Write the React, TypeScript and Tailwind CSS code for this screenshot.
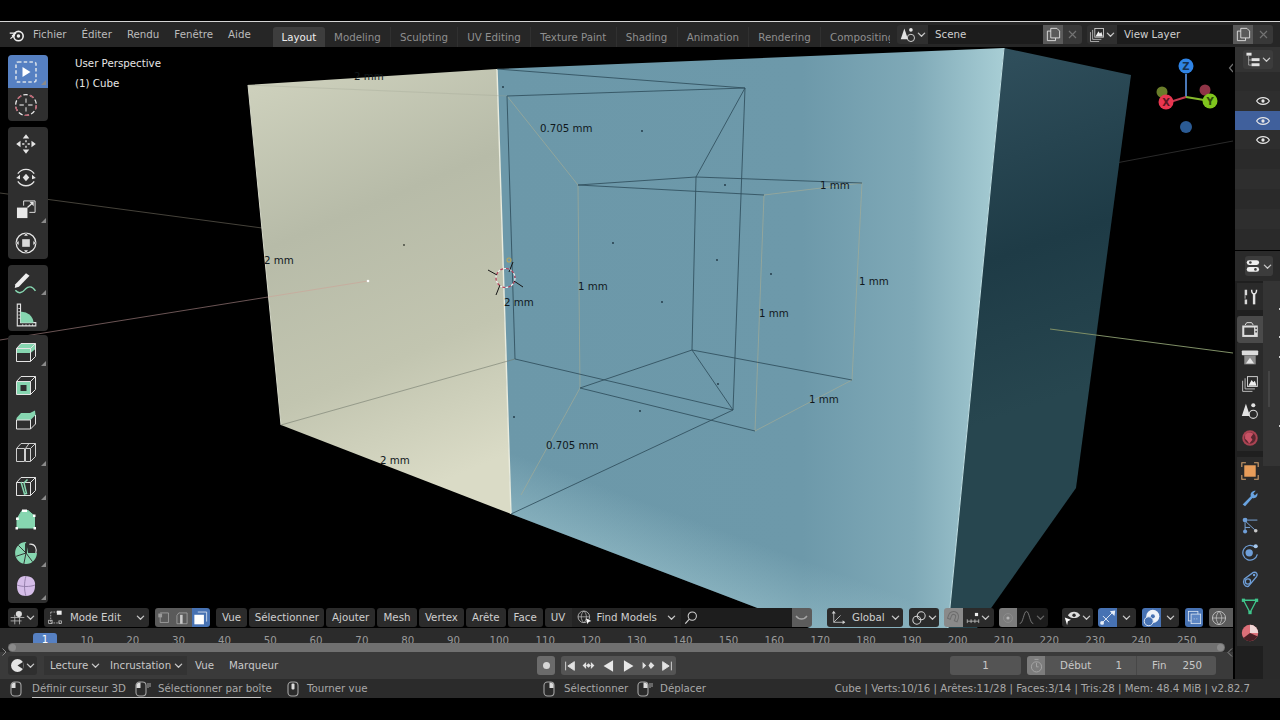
import React from 'react';

const W = '#e4e4e4';
const G = '#86d6b0';

// small triangle in the corner of tool buttons
const Corner = () => (
  <svg width="5" height="5" viewBox="0 0 5 5" className="absolute right-[2px] bottom-[3px]">
    <path d="M5 0V5H0Z" fill="#8a8a8a" />
  </svg>
);

const Chev = ({ c = '#c8c8c8', s = 9 }: { c?: string; s?: number }) => (
  <svg width={s} height={s} viewBox="0 0 10 10" fill="none">
    <path d="M1.5 3.5L5 7L8.5 3.5" stroke={c} strokeWidth="1.4" strokeLinecap="round" strokeLinejoin="round" />
  </svg>
);

const Ico = ({ s = 22, children }: { s?: number; children: React.ReactNode }) => (
  <svg width={s} height={s} viewBox="0 0 22 22" fill="none">{children}</svg>
);

const Cube = () => (
  <path d="M1.5 7.5H15.5V20.5H1.5ZM1.5 7.5L6 2.5H20.5V15.5L15.5 20.5M15.5 7.5L20.5 2.5" stroke={W} strokeWidth="1" strokeLinejoin="round" />
);

const tools: { icon: React.ReactNode; corner?: boolean; active?: boolean }[][] = [
  [
    {
      active: true,
      corner: true,
      icon: (
        <Ico>
          <rect x="1" y="1" width="20" height="20" rx="2" stroke="#d7dfe9" strokeWidth="1.6" strokeDasharray="3.5 2.2" />
          <path d="M7.5 6V16L15.5 11Z" fill="#fff" />
        </Ico>
      ),
    },
    {
      icon: (
        <Ico s={24}>
          <circle cx="11" cy="11" r="9.5" stroke="#e8e8e8" strokeWidth="1.2" strokeDasharray="4 2" />
          <circle cx="11" cy="11" r="9.5" stroke="#c05a6a" strokeWidth="1.2" strokeDasharray="4 8" />
          <path d="M11 5V9M11 13V17M5 11H9M13 11H17" stroke="#bbb" strokeWidth="1.2" />
        </Ico>
      ),
    },
  ],
  [
    {
      icon: (
        <Ico s={24}>
          <path d="M11 2L14 6H8ZM11 20L8 16H14ZM2 11L6 8V14ZM20 11L16 14V8Z" fill={W} />
          <path d="M7.5 11H9.5M12.5 11H14.5M11 7.5V9.5M11 12.5V14.5" stroke={W} strokeWidth="1.3" />
        </Ico>
      ),
    },
    {
      icon: (
        <Ico s={24}>
          <path d="M3.5 8A9 9 0 0 1 18.5 8M3.5 15A9 9 0 0 0 18.5 15" stroke={W} strokeWidth="1.2" />
          <path d="M11 8L14 11.5L11 15L8 11.5Z" fill={W} />
          <path d="M2 12L5.5 9V13ZM20 12L16.5 9V13Z" fill={W} />
        </Ico>
      ),
    },
    {
      corner: true,
      icon: (
        <Ico s={21}>
          <rect x="1" y="9" width="11" height="11" fill="#e8e8e8" />
          <path d="M8 7V2H20V14H14" stroke={W} strokeWidth="1" />
          <path d="M12 9L17 4.5" stroke={W} strokeWidth="1.4" />
          <path d="M18.5 3V7.5L14 3Z" fill={W} />
        </Ico>
      ),
    },
    {
      icon: (
        <Ico s={24}>
          <circle cx="11" cy="11" r="9" stroke={W} strokeWidth="1.2" />
          <rect x="7.5" y="7.5" width="7" height="7" fill="#d8d8d8" />
          <path d="M11 1.5L13 4.5H9ZM11 20.5L9 17.5H13ZM1.5 11L4.5 9V13ZM20.5 11L17.5 13V9Z" fill={W} stroke="#333" strokeWidth=".4" />
        </Ico>
      ),
    },
  ],
  [
    {
      corner: true,
      icon: (
        <Ico s={26}>
          <path d="M2 13L11 3.5L14 5.8L5 15L1.5 16Z" fill="#eee" />
          <path d="M2 18C5 21.5 8 20 10.5 17C13 14.5 16 14 19 18.5" stroke={G} strokeWidth="1.2" />
        </Ico>
      ),
    },
    {
      icon: (
        <Ico s={24}>
          <path d="M3 1H6V18H20V21H3Z" stroke={W} strokeWidth="1" />
          <path d="M6 8A11 11 0 0 1 18 18H6Z" fill={G} />
          <path d="M4 5H6M4 8H6M4 11H6M4 14H6M8 19.5V21M11 19.5V21M14 19.5V21M17 19.5V21" stroke={W} strokeWidth=".8" />
        </Ico>
      ),
    },
  ],
  [
    {
      corner: true,
      icon: (
        <Ico>
          <path d="M1.5 7.5L6 2.5H20.5V8L15.5 12H1.5Z" fill={G} />
          <Cube />
        </Ico>
      ),
    },
    {
      icon: (
        <Ico>
          <path d="M1.5 7.5H15.5V20.5H1.5ZM5.5 11V17H11.5V11Z" fill={G} fillRule="evenodd" />
          <Cube />
        </Ico>
      ),
    },
    {
      icon: (
        <Ico>
          <path d="M1.5 10L6 5H15L20 2.5L20.5 7L15.5 12H1.5Z" fill={G} />
          <path d="M1.5 12H15.5V21H1.5ZM15.5 21L20.5 16V7" stroke={W} strokeWidth="1" />
        </Ico>
      ),
    },
    {
      corner: true,
      icon: (
        <Ico>
          <path d="M1.5 7.5H9.5V20.5H1.5ZM1.5 7.5L6 2.5H20.5V15.5L15.5 20.5H10.5V7.5M10.5 7.5H15.5V20.5M15.5 7.5L20.5 2.5M10.5 7.5L14 2.5" stroke="#cfcfcf" strokeWidth="1" />
        </Ico>
      ),
    },
    {
      corner: true,
      icon: (
        <Ico>
          <Cube />
          <path d="M6 7L9.5 19L11.5 18.5L9 8L12.5 4.5" stroke={G} strokeWidth="1.5" />
        </Ico>
      ),
    },
    {
      icon: (
        <Ico>
          <path d="M7 2.5H13L19.5 8V20H2V11Z" fill={G} stroke={G} />
          <path d="M7 1.5H12V4H7ZM1 9.5H3.8V12H1ZM18 6.5H20.5V9H18ZM.5 19H3V21.5H.5ZM18.5 19H21V21.5H18.5Z" fill="#fff" />
        </Ico>
      ),
    },
    {
      corner: true,
      icon: (
        <Ico s={24}>
          <path d="M11 1A10 10 0 1 0 21 11L13 11Z" fill={G} />
          <path d="M11 11L4 4M11 11L2 14M11 11L9 21M11 11L17 19" stroke="#333" strokeWidth=".9" />
          <path d="M11 11V2" stroke="#222" strokeWidth="1.6" />
          <path d="M14 3C20 2 21 8 20 11" stroke={W} strokeWidth="1" />
        </Ico>
      ),
    },
    {
      corner: true,
      icon: (
        <Ico>
          <path d="M10 1C17 1 21 5 20 11C20 17 17 21 11 21C5 21 2 18 2 11C2 5 5 1 10 1Z" fill="#d5bde8" />
          <path d="M2 10C7 12 15 12 20 10M11 1C9 8 9 15 11 21" stroke="#8f7aa5" strokeWidth=".9" />
        </Ico>
      ),
    },
  ],
];

const Scene3D = () => (
  <svg className="absolute inset-0" width="1233" height="581" viewBox="0 47 1233 581">
    <defs>
      <linearGradient id="pale" x1="0.2" y1="0" x2="0.45" y2="1">
        <stop offset="0" stopColor="#cdd0bc" />
        <stop offset="0.35" stopColor="#b7bba8" />
        <stop offset="0.7" stopColor="#c2c5b0" />
        <stop offset="1" stopColor="#dadbc6" />
      </linearGradient>
      <linearGradient id="blue" gradientUnits="userSpaceOnUse" x1="500" y1="0" x2="1004" y2="0">
        <stop offset="0" stopColor="#6c98a9" />
        <stop offset="0.6" stopColor="#6d99aa" />
        <stop offset="0.82" stopColor="#7fa9b7" />
        <stop offset="1" stopColor="#a8ced5" />
      </linearGradient>
      <linearGradient id="glow" gradientUnits="userSpaceOnUse" x1="700" y1="590" x2="722" y2="530">
        <stop offset="0" stopColor="#b8dde2" stopOpacity="0.35" />
        <stop offset="1" stopColor="#b8dde2" stopOpacity="0" />
      </linearGradient>
      <linearGradient id="dark" gradientUnits="userSpaceOnUse" x1="1000" y1="60" x2="1110" y2="380">
        <stop offset="0" stopColor="#2f4e5b" />
        <stop offset="0.55" stopColor="#1e3b46" />
        <stop offset="1" stopColor="#27464f" />
      </linearGradient>
    </defs>

    {/* floor grid lines behind the mesh */}
    <path d="M0 193L262 228" stroke="#45423a" strokeWidth="1" />
    <path d="M0 340L268 297" stroke="#6a5454" strokeWidth="1" />
    <path d="M1100 166L1233 141" stroke="#2a2a2a" strokeWidth="1" />

    {/* faces */}
    <polygon points="248,85 497,69 511,514 281,425" fill="url(#pale)" />
    <polygon points="497,69 1004,48 948,628 810,628 511,514" fill="url(#blue)" />
    <polygon points="497,69 1004,48 948,628 810,628 511,514" fill="url(#glow)" />
    <polygon points="1004,48 1131,75 1076,488 977,628 948,628" fill="url(#dark)" />
    <path d="M497 69L511 514" stroke="#e9ecdf" strokeWidth="1.4" />
    <path d="M1004 48L948 628" stroke="#c0dfe4" strokeWidth="1" />
    <path d="M248 85L281 425" stroke="#d5d8c8" strokeWidth="1" />
    <path d="M1050 329L1233 353" stroke="#7f8f66" strokeWidth="1" />

    {/* hidden edges seen through the left face */}
    <path d="M368 281L268 297" stroke="#c6ae9f" strokeWidth="1" />
    <path d="M248 85L507 96" stroke="#9da392" strokeWidth=".6" opacity="0.5" />
    <path d="M281 425L515 359" stroke="#6f7568" strokeWidth=".7" opacity="0.8" />

    {/* olive selected edges */}
    <g stroke="#a6ad96" strokeWidth="1" fill="none" opacity="0.65">
      <path d="M507 96L578 185" />
      <path d="M578 185L580 388" />
      <path d="M580 388L521 495" />
      <path d="M764 195L862 183" />
      <path d="M764 195L755 431" />
      <path d="M862 183L852 380" />
      <path d="M755 431L852 380" />
    </g>

    {/* dark wire edges */}
    <g stroke="#2f4e5c" strokeWidth=".85" fill="none">
      <path d="M497 69L745 88" />
      <path d="M507 96L745 88" />
      <path d="M507 96L515 359" />
      <path d="M745 88L696 177" />
      <path d="M745 88L733 410" />
      <path d="M578 185L696 177" />
      <path d="M578 185L764 195" />
      <path d="M696 177L862 183" />
      <path d="M696 177L692 350" />
      <path d="M692 350L852 380" />
      <path d="M692 350L580 388" />
      <path d="M580 388L755 431" />
      <path d="M692 350L733 410" />
      <path d="M515 359L733 410" />
      <path d="M511 514L733 410" />
    </g>

    {/* face dots */}
    <g fill="#1d3440">
      {[[503, 87], [642, 131], [613, 243], [725, 185], [717, 260], [771, 274], [662, 302], [718, 384], [640, 411], [514, 417]].map(([x, y]) => (
        <circle key={`${x}-${y}`} cx={x} cy={y} r=".9" />
      ))}
      <circle cx="404" cy="245" r=".9" fill="#3c3f36" />
    </g>
    <circle cx="368" cy="281" r="1.3" fill="#fff" />

    {/* 3d cursor */}
    <circle cx="505.5" cy="278" r="9.5" fill="none" stroke="#f0f0f0" strokeWidth="1.2" strokeDasharray="3 3" />
    <circle cx="505.5" cy="278" r="9.5" fill="none" stroke="#b8405a" strokeWidth="1.2" strokeDasharray="3 3" strokeDashoffset="3" />
    <path d="M488 270L497 275M514 281L523 287M513 262L509 272M500 285L496 295" stroke="#151515" strokeWidth="1" />
    <circle cx="509" cy="260" r="2" fill="none" stroke="#b9a55a" strokeWidth="1.1" />

    {/* measurements */}
    <g className="font-['DejaVu_Sans',sans-serif]" fontSize="10.25" fill="#10181c">
      <text x="354" y="80">2 mm</text>
      <text x="540" y="132">0.705 mm</text>
      <text x="820" y="189">1 mm</text>
      <text x="264" y="264">2 mm</text>
      <text x="578" y="290">1 mm</text>
      <text x="859" y="285">1 mm</text>
      <text x="504" y="306">2 mm</text>
      <text x="759" y="317">1 mm</text>
      <text x="809" y="403">1 mm</text>
      <text x="546" y="449">0.705 mm</text>
      <text x="380" y="464">2 mm</text>
    </g>

    {/* nav gizmo */}
    <path d="M1186 97V74" stroke="#4a78b8" strokeWidth="2" />
    <path d="M1186 97L1170 102" stroke="#c23a50" strokeWidth="2" />
    <path d="M1186 97L1204 100" stroke="#85b82c" strokeWidth="2" />
    <circle cx="1162" cy="92" r="5.5" fill="#6a7d2a" />
    <circle cx="1205" cy="90" r="5.5" fill="#8f3446" />
    <circle cx="1186" cy="127" r="6" fill="#2b5b94" />
    <circle cx="1186" cy="66" r="7.5" fill="#2f84e6" />
    <circle cx="1166" cy="102" r="7.5" fill="#e93650" />
    <circle cx="1210" cy="101" r="7.5" fill="#80c51d" />
    <g className="font-['DejaVu_Sans',sans-serif]" fontSize="10" fontWeight="700" textAnchor="middle" fill="#15304f">
      <text x="1186" y="70">Z</text>
      <text x="1166" y="106" fill="#5c1622">X</text>
      <text x="1210" y="105" fill="#2e4a0a">Y</text>
    </g>
    <path d="M1233 64L1229.5 68L1233 72" stroke="#707070" strokeWidth="1.2" fill="none" />
  </svg>
);

const MenuBtn = ({ label, w }: { label: string; w: string }) => (
  <div className={`flex items-center justify-center rounded-[3px] bg-[#2b2b2b] text-[#cfcfcf] ${w}`}>{label}</div>
);

const BottomBar = () => (
  <div className="absolute left-[8px] bottom-[1px] flex h-[19px] w-[1225px] overflow-hidden">
    <div className="flex w-[30px] items-center justify-center gap-[1px] rounded-[3px] bg-[#2b2b2b]">
      <Ico s={15}>
        <path d="M1 11H21M1 16H17M7 7V21M14 7V21" stroke="#b9b9b9" strokeWidth="1.2" />
        <circle cx="13" cy="6" r="4.5" fill="#dcdcdc" />
      </Ico>
      <Chev />
    </div>
    <div className="ml-[6px] flex w-[105px] items-center rounded-[3px] bg-[#2b2b2b] pl-[4px] pr-[4px] text-[#cfcfcf]">
      <Ico s={15}>
        <path d="M4 3V19H18" stroke="#bbb" strokeWidth="1.2" strokeDasharray="2.5 1.5" />
        <path d="M4 3H14" stroke="#bbb" strokeWidth="1.2" strokeDasharray="2.5 1.5" />
        <rect x="1" y="15" width="5" height="5" fill="none" stroke="#ddd" />
        <rect x="13" y="1" width="7" height="6" fill="#eee" />
        <rect x="16" y="16" width="4" height="4" fill="none" stroke="#ddd" />
      </Ico>
      <span className="ml-[7px] flex-1">Mode Edit</span>
      <Chev />
    </div>
    <div className="ml-[6px] flex w-[55px] overflow-hidden rounded-[3px]">
      <div className="flex w-[18px] items-center justify-center bg-[#5a5a5a]">
        <Ico s={14}>
          <path d="M5 3H18V18H5V9" stroke="#a9a9a9" strokeWidth="1.2" />
          <rect x="2" y="4" width="6" height="6" fill="#9a9a9a" />
        </Ico>
      </div>
      <div className="flex w-[19px] items-center justify-center bg-[#5a5a5a]">
        <Ico s={14}>
          <path d="M3 7L6 3H19V20H3Z" stroke="#a9a9a9" strokeWidth="1.2" />
          <rect x="8" y="6" width="4" height="14" fill="#c9c9c9" />
        </Ico>
      </div>
      <div className="flex w-[18px] items-center justify-center bg-[#4772b3]">
        <Ico s={15}>
          <path d="M7 3H20V17" stroke="#dfe8f4" strokeWidth="1.2" />
          <rect x="2" y="7" width="14" height="14" fill="#fff" />
        </Ico>
      </div>
    </div>
    <MenuBtn label="Vue" w="ml-[6px] w-[32px]" />
    <MenuBtn label="Sélectionner" w="ml-[2px] w-[75px]" />
    <MenuBtn label="Ajouter" w="ml-[2px] w-[49px]" />
    <MenuBtn label="Mesh" w="ml-[2px] w-[40px]" />
    <MenuBtn label="Vertex" w="ml-[2px] w-[45px]" />
    <MenuBtn label="Arête" w="ml-[2px] w-[40px]" />
    <MenuBtn label="Face" w="ml-[2px] w-[35px]" />
    <div className="ml-[2px] flex w-[27px] items-center justify-center rounded-l-[3px] bg-[#2b2b2b] text-[#cfcfcf]">UV</div>
    <div className="flex w-[110px] items-center bg-[#242424] pl-[5px] pr-[5px] text-[#cfcfcf]">
      <Ico s={15}>
        <circle cx="10" cy="10" r="8.5" stroke="#c4c4c4" strokeWidth="1.2" />
        <path d="M1.5 10H18.5M10 1.5C5 6 5 14 10 18.5M10 1.5C15 6 15 14 10 18.5" stroke="#c4c4c4" strokeWidth="1" />
        <path d="M13 12L21 16L17 17.5L15.5 21Z" fill="#fff" />
      </Ico>
      <span className="ml-[5px] flex-1">Find Models</span>
      <Chev />
    </div>
    <div className="flex w-[111px] items-center bg-[#1d1d1d] pl-[3px]">
      <Ico s={14}>
        <circle cx="13" cy="8" r="6.5" stroke="#d0d0d0" strokeWidth="1.6" />
        <path d="M8 13L2 20" stroke="#d0d0d0" strokeWidth="1.8" />
      </Ico>
    </div>
    <div className="flex w-[20px] items-center justify-center rounded-r-[3px] bg-[#5c5c5c]">
      <svg width="13" height="6" viewBox="0 0 13 6" fill="none">
        <path d="M1 1C4 5 9 5 12 1" stroke="#a5a5a5" strokeWidth="1.3" />
      </svg>
    </div>
    <div className="ml-[15px] flex w-[76px] items-center rounded-[3px] bg-[#2b2b2b] pl-[4px] pr-[3px] text-[#cfcfcf]">
      <Ico s={15}>
        <path d="M4 3V18H20M4 18L14 8" stroke="#cfcfcf" strokeWidth="1.2" />
        <path d="M4 1L7 5H1ZM21 18L17 21V15Z" fill="#cfcfcf" />
      </Ico>
      <span className="ml-[6px] flex-1">Global</span>
      <Chev />
    </div>
    <div className="ml-[6px] flex w-[30px] items-center justify-center gap-[1px] rounded-[3px] bg-[#2b2b2b]">
      <Ico s={16}>
        <circle cx="8" cy="14" r="5.5" stroke="#d4d4d4" strokeWidth="1.4" />
        <circle cx="14" cy="8" r="5.5" stroke="#d4d4d4" strokeWidth="1.4" />
      </Ico>
      <Chev />
    </div>
    <div className="ml-[5px] flex w-[50px] overflow-hidden rounded-[3px]">
      <div className="flex w-[19px] items-center justify-center bg-[#8a8a8a]">
        <Ico s={16}>
          <path d="M4 14V9A7 7 0 0 1 18 9V14H14V9A3 3 0 0 0 8 9V14Z" stroke="#6d6d6d" strokeWidth="1.4" transform="rotate(20 11 11)" />
        </Ico>
      </div>
      <div className="flex flex-1 items-center justify-center gap-[1px] bg-[#2b2b2b]">
        <Ico s={14}>
          <path d="M2 13V19M8 13V19M14 13V19M20 13V19M2 16H20" stroke="#c9c9c9" strokeWidth="1.2" />
          <rect x="14" y="3" width="5" height="5" fill="#eee" />
        </Ico>
        <Chev />
      </div>
    </div>
    <div className="ml-[5px] flex w-[50px] overflow-hidden rounded-[3px]">
      <div className="flex w-[18px] items-center justify-center bg-[#7c7c7c]">
        <Ico s={14}>
          <circle cx="11" cy="11" r="7" stroke="#939393" strokeWidth="1" />
          <circle cx="11" cy="11" r="2.5" fill="#b5b5b5" />
        </Ico>
      </div>
      <div className="flex flex-1 items-center justify-center gap-[2px] bg-[#1c1c1c]">
        <Ico s={15}>
          <path d="M1 20C6 20 7 2 11 2C15 2 16 20 21 20" stroke="#8a8a8a" strokeWidth="1.2" />
        </Ico>
        <Chev c="#666" />
      </div>
    </div>
    <div className="ml-[14px] flex w-[31px] items-center justify-center gap-[1px] rounded-[3px] bg-[#2b2b2b]">
      <Ico s={17}>
        <path d="M5 8C9 2 17 2 21 8C17 13 9 13 5 8Z" fill="#ddd" />
        <circle cx="13" cy="8" r="2.2" fill="#2b2b2b" />
        <path d="M1 11L9 14L5 16L4 21Z" fill="#fff" />
      </Ico>
      <Chev />
    </div>
    <div className="ml-[5px] flex w-[38px] overflow-hidden rounded-[3px]">
      <div className="flex w-[19px] items-center justify-center bg-[#4772b3]">
        <Ico s={17}>
          <path d="M4 18L18 4M5 9L13 17" stroke="#e6edf7" strokeWidth="1.2" />
          <path d="M21 2L20 9L14 3Z" fill="#e6edf7" />
          <circle cx="4" cy="18" r="2.5" fill="#e6edf7" />
        </Ico>
      </div>
      <div className="flex flex-1 items-center justify-center bg-[#2b2b2b]"><Chev /></div>
    </div>
    <div className="ml-[6px] flex w-[37px] overflow-hidden rounded-[3px]">
      <div className="flex w-[19px] items-center justify-center bg-[#4772b3]">
        <Ico s={18}>
          <circle cx="12" cy="9" r="8" fill="#eef2f8" />
          <circle cx="12" cy="9" r="2.5" fill="#4772b3" />
          <circle cx="7" cy="15" r="5.5" fill="#4772b3" stroke="#dfe7f3" strokeWidth="1.2" />
        </Ico>
      </div>
      <div className="flex flex-1 items-center justify-center bg-[#2b2b2b]"><Chev /></div>
    </div>
    <div className="ml-[6px] flex w-[18px] items-center justify-center rounded-[3px] bg-[#4772b3]">
      <Ico s={15}>
        <rect x="2" y="2" width="14" height="14" stroke="#dbe5f3" strokeWidth="1.2" />
        <rect x="6" y="6" width="14" height="14" fill="#5d86c4" stroke="#dbe5f3" strokeWidth="1.2" />
        <path d="M10 13H11M14 13H15" stroke="#fff" strokeWidth="1.2" />
      </Ico>
    </div>
    <div className="ml-[6px] flex w-[24px] items-center rounded-l-[3px] bg-[#5a5a5a] pl-[2px]">
      <Ico s={16}>
        <circle cx="11" cy="11" r="9" stroke="#c9c9c9" strokeWidth="1.2" />
        <path d="M2 11H20M11 2C6 7 6 15 11 20M11 2C16 7 16 15 11 20" stroke="#c9c9c9" strokeWidth="1" />
      </Ico>
    </div>
  </div>
);

const Header = () => {
  const menus = ['Fichier', 'Éditer', 'Rendu', 'Fenêtre', 'Aide'];
  const tabs = ['Layout', 'Modeling', 'Sculpting', 'UV Editing', 'Texture Paint', 'Shading', 'Animation', 'Rendering', 'Compositing'];
  return (
    <div className="flex h-[25px] items-center bg-[#262626]">
      <div className="ml-[9px] w-[16px]">
        <Ico s={16}>
          <circle cx="13" cy="12.5" r="6.5" stroke="#eee" strokeWidth="2.2" />
          <circle cx="13" cy="12.5" r="2.4" fill="#eee" />
          <path d="M1 8.5H10M4 12.5L9 9M2 16L8 11" stroke="#eee" strokeWidth="1.7" />
        </Ico>
      </div>
      <div className="ml-[8px] flex w-[240px] gap-[15px] text-[#bcbcbc]">
        {menus.map(m => <span key={m}>{m}</span>)}
      </div>
      <div className="flex h-full w-[617px] items-end overflow-hidden pt-[5px]">
        {tabs.map((t, i) => (
          <div
            key={t}
            className={i === 0
              ? 'flex h-full shrink-0 items-center rounded-t-[3px] bg-[#3d3d3d] px-[8.5px] text-[#eeeeee]'
              : 'flex h-full shrink-0 items-center border-r border-[#303030] px-[9.2px] text-[#8f8f8f]'}
          >
            {t}
          </div>
        ))}
      </div>
      <div className="ml-[7px] flex w-[31px] h-[19px] items-center justify-center gap-[1px] rounded-l-[3px] bg-[#2f2f2f]">
        <SceneIcon />
        <Chev />
      </div>
      <div className="flex h-[19px] w-[115px] items-center bg-[#1c1c1c] pl-[7px] text-[#d0d0d0]">Scene</div>
      <div className="flex h-[19px] w-[20px] items-center justify-center bg-[#5a5a5a]"><CopyIcon /></div>
      <div className="flex h-[19px] w-[19px] items-center justify-center rounded-r-[3px] bg-[#383838]"><XIcon /></div>
      <div className="ml-[5px] flex w-[30px] h-[19px] items-center justify-center gap-[1px] rounded-l-[3px] bg-[#2f2f2f]">
        <LayerIcon />
        <Chev />
      </div>
      <div className="flex h-[19px] w-[116px] items-center bg-[#1c1c1c] pl-[7px] text-[#d0d0d0]">View Layer</div>
      <div className="flex h-[19px] w-[20px] items-center justify-center bg-[#5a5a5a]"><CopyIcon /></div>
      <div className="flex h-[19px] w-[20px] items-center justify-center rounded-r-[3px] bg-[#383838]"><XIcon /></div>
    </div>
  );
};

const SceneIcon = ({ s = 16 }: { s?: number }) => (
  <Ico s={s}>
    <path d="M6 2L11 17H1Z" fill="#e2e2e2" />
    <circle cx="15" cy="4" r="2.5" fill="#e2e2e2" />
    <circle cx="15" cy="15" r="5" stroke="#d8d8d8" strokeWidth="1.3" />
  </Ico>
);

const LayerIcon = ({ s = 16 }: { s?: number }) => (
  <Ico s={s}>
    <path d="M2 7V20H14M5 4V17H17" stroke="#c8c8c8" strokeWidth="1.1" />
    <rect x="8" y="2" width="12" height="12" fill="#2b2b2b" stroke="#dcdcdc" strokeWidth="1.1" />
    <path d="M9 13L13 6L15 9L17 7L19 13Z" fill="#eee" />
  </Ico>
);

const CopyIcon = () => (
  <Ico s={15}>
    <path d="M7 2H16L20 6V16H7Z" stroke="#e4e4e4" strokeWidth="1.3" />
    <path d="M7 6H2V20H14V16" stroke="#e4e4e4" strokeWidth="1.3" />
  </Ico>
);

const XIcon = () => (
  <svg width="9" height="9" viewBox="0 0 9 9" fill="none">
    <path d="M1 1L8 8M8 1L1 8" stroke="#727272" strokeWidth="1.2" />
  </svg>
);

const Eye = () => (
  <Ico s={14}>
    <path d="M1 11C5 4 17 4 21 11C17 18 5 18 1 11Z" stroke="#e6e6e6" strokeWidth="1.8" />
    <circle cx="11" cy="11" r="2.6" fill="#e6e6e6" />
  </Ico>
);

const propTabs: { icon: React.ReactNode; active?: boolean }[][] = [
  [
    {
      icon: (
        <Ico s={18}>
          <path d="M6 2V9M6 14V20" stroke="#d8d8d8" strokeWidth="3" />
          <path d="M5 9V13" stroke="#9f9f9f" strokeWidth="1.4" />
          <path d="M13 2C13 6 14 7 16 7C18 7 19 6 19 2" stroke="#e2e2e2" strokeWidth="1.8" />
          <path d="M16 7V20" stroke="#e2e2e2" strokeWidth="3" />
        </Ico>
      ),
    },
  ],
  [
    {
      active: true,
      icon: (
        <Ico s={18}>
          <path d="M5 5L7 2H13L15 5" stroke="#ddd" strokeWidth="1.2" />
          <rect x="1.5" y="5.5" width="19" height="14" fill="#ddd" />
          <rect x="4" y="8" width="12" height="9" fill="#3f3f3f" />
          <rect x="17.5" y="8" width="2" height="2" fill="#444" />
          <rect x="17.5" y="12" width="2" height="2" fill="#444" />
        </Ico>
      ),
    },
    {
      icon: (
        <Ico s={18}>
          <rect x="1" y="3" width="20" height="6" rx="1" fill="#ddd" />
          <path d="M4 9H18V20H4Z" fill="#8d8d8d" />
          <path d="M6 19L11 12L16 19Z" fill="#e5e5e5" />
        </Ico>
      ),
    },
    { icon: <LayerIcon s={18} /> },
    { icon: <SceneIcon s={18} /> },
    {
      icon: (
        <Ico s={18}>
          <circle cx="11" cy="11" r="9.5" fill="#a94352" />
          <circle cx="11" cy="11" r="7" fill="#5a2730" />
          <path d="M5 7C8 3 13 4 15 6L12 10L14 13L10 18C8 14 6 13 5 12Z" fill="#c85265" />
        </Ico>
      ),
    },
  ],
  [
    {
      icon: (
        <Ico s={18}>
          <path d="M1 6V1H6M16 1H21V6M1 16V21H6M16 21H21V16" stroke="#d4a26f" strokeWidth="1.3" />
          <rect x="4" y="4" width="14" height="14" fill="#e89d5a" />
        </Ico>
      ),
    },
    {
      icon: (
        <Ico s={18}>
          <path d="M2 19L12 9C11 5 13 2 18 2L15 5.5L17 8L20 5C21 10 17 12 14 11L5 21Z" fill="#69a3e0" />
        </Ico>
      ),
    },
    {
      icon: (
        <Ico s={18}>
          <circle cx="5" cy="5" r="3" fill="#6f9fd8" />
          <circle cx="18" cy="18" r="2.2" fill="#c8c8c8" />
          <path d="M5 8V19M6 7L17 17M8 5H20M5 14L11 14" stroke="#7aa5d8" strokeWidth="1.2" />
          <circle cx="5" cy="19" r="2.5" fill="#6f9fd8" />
        </Ico>
      ),
    },
    {
      icon: (
        <Ico s={18}>
          <path d="M17 5A9 9 0 1 0 20 14" stroke="#6f9fd8" strokeWidth="1.5" />
          <circle cx="10" cy="12" r="4.5" fill="#6f9fd8" />
          <circle cx="18" cy="4" r="2.5" fill="#a8c8ec" />
        </Ico>
      ),
    },
    {
      icon: (
        <Ico s={18}>
          <path d="M4 11L15 3C19 2 21 5 19 8L9 20C4 21 2 15 4 11Z" stroke="#6f9fd8" strokeWidth="1.6" />
          <circle cx="8.5" cy="14" r="3.2" stroke="#6f9fd8" strokeWidth="1.6" />
          <circle cx="16" cy="6" r="1.5" fill="#6f9fd8" />
        </Ico>
      ),
    },
    {
      icon: (
        <Ico s={18}>
          <path d="M3 4H19L11 19Z" stroke="#3fc58c" strokeWidth="1.6" />
          <rect x="1" y="2" width="4" height="4" fill="#3fc58c" />
          <rect x="17" y="2" width="4" height="4" fill="#3fc58c" />
          <rect x="9" y="17" width="4" height="4" fill="#3fc58c" />
        </Ico>
      ),
    },
    {
      icon: (
        <Ico s={18}>
          <circle cx="11" cy="11" r="10" fill="#dd6f78" />
          <path d="M11 11V1A10 10 0 0 1 21 11Z" fill="#f0d6d6" />
          <path d="M11 11L3 17A10 10 0 0 0 20 15Z" fill="#4a1f25" />
        </Ico>
      ),
    },
  ],
];

const Sidebar = () => (
  <div className="ml-[2px] flex w-[45px] flex-col">
    {/* outliner */}
    <div className="flex h-[203px] flex-col bg-[#292929]">
      <div className="flex h-[25px] items-center justify-end bg-[#333333] pr-[7px]">
        <div className="flex h-[19px] w-[30px] items-center justify-center gap-[1px] rounded-[3px] bg-[#3c3c3c]">
          <Ico s={16}>
            <rect x="2" y="1" width="7" height="4" fill="#e2e2e2" />
            <path d="M5 5V18H9M5 11H9" stroke="#bbb" strokeWidth="1" />
            <rect x="9" y="8.5" width="11" height="4" fill="#e2e2e2" />
            <rect x="9" y="15.5" width="11" height="4" fill="#e2e2e2" />
          </Ico>
          <Chev />
        </div>
      </div>
      <div className="h-[19px] bg-[#2b2b2b]" />
      <div className="flex h-[20px] items-center justify-end bg-[#2e2e2e] pr-[10px]"><Eye /></div>
      <div className="flex h-[19px] items-center justify-end bg-[#40609c] pr-[10px]"><Eye /></div>
      <div className="flex h-[19px] items-center justify-end bg-[#2e2e2e] pr-[10px]"><Eye /></div>
      <div className="h-[20px] bg-[#2a2a2a]" />
      <div className="h-[20px] bg-[#2e2e2e]" />
      <div className="h-[20px] bg-[#2a2a2a]" />
      <div className="h-[20px] bg-[#2e2e2e]" />
      <div className="flex-1 bg-[#2a2a2a]" />
    </div>
    {/* properties */}
    <div className="mt-[1px] flex h-[30px] items-center justify-end bg-[#2a2a2a] pr-[7px]">
      <div className="flex h-[20px] w-[28px] items-center justify-center gap-[1px] rounded-[3px] bg-[#3c3c3c]">
        <Ico s={16}>
          <rect x="1" y="3" width="17" height="6.5" rx="3.2" fill="#eee" />
          <rect x="1" y="12.5" width="17" height="6.5" rx="3.2" fill="#eee" />
          <circle cx="6" cy="6.2" r="1.8" fill="#3c3c3c" />
          <circle cx="13" cy="15.7" r="1.8" fill="#3c3c3c" />
        </Ico>
        <Chev />
      </div>
    </div>
    <div className="flex flex-1 overflow-hidden">
      <div className="flex w-[28px] flex-col bg-[#1f1f1f] pl-[2px] pt-[2px]">
        {propTabs.map((group, g) => (
          <div key={g} className="mb-[6px] flex flex-col">
            {group.map((t, i) => (
              <div
                key={i}
                className={t.active
                  ? 'flex h-[27px] w-[26px] items-center justify-center rounded-l-[3px] bg-[#4a4a4a]'
                  : 'flex h-[27px] w-[26px] items-center justify-center bg-[#2a2a2a]'}
              >
                {t.icon}
              </div>
            ))}
          </div>
        ))}
      </div>
      <div className="flex w-[17px] flex-col">
        <div className="relative h-[185px] bg-[#343434]">
          <div className="absolute right-0 top-[27px] h-[1.5px] w-[1.5px] bg-[#cfcfcf]" />
          <div className="absolute right-0 top-[55px] h-[1.5px] w-[1.5px] bg-[#cfcfcf]" />
          <div className="absolute right-0 top-[75px] h-[1.5px] w-[1.5px] bg-[#cfcfcf]" />
          <div className="absolute right-0 top-[144px] h-[1.5px] w-[1.5px] bg-[#cfcfcf]" />
          <div className="absolute left-[5px] top-[90px] h-[36px] w-[2px] bg-[#454545]" />
        </div>
        <div className="flex-1 bg-[#2a2a2a]" />
      </div>
    </div>
  </div>
);

const Timeline = () => {
  const ticks = Array.from({ length: 25 }, (_, i) => (i + 1) * 10);
  return (
    <div className="relative flex h-[51px] flex-col">
      <div className="flex h-[15px] overflow-hidden bg-[#2b2b2b] pl-[64px] pt-[7px] text-[#9a9a9a]">
        {ticks.map(t => (
          <div key={t} className="w-[45.84px] shrink-0 text-center">{t}</div>
        ))}
      </div>
      {/* playhead */}
      <div className="absolute left-[33px] top-[5px] flex h-[10px] w-[24px] justify-center overflow-hidden rounded-t-[3px] bg-[#5680c2] pt-[1px] leading-[11px] text-white">1</div>
      {/* scrollbar */}
      <div className="flex h-[9px] bg-[#2b2b2b] pl-[8px] pr-[8px]">
        <div className="flex h-[9px] w-full items-center justify-between rounded-full bg-[#707070] px-[1px]">
          <div className="h-[7px] w-[7px] rounded-full bg-[#8b8b8b]" />
          <div className="h-[7px] w-[7px] rounded-full bg-[#8b8b8b]" />
        </div>
      </div>
      {/* region collapse arrows */}
      <svg width="6" height="8" viewBox="0 0 6 8" fill="none" className="absolute left-[1px] top-[20px]">
        <path d="M1.5 .5L5 4L1.5 7.5" stroke="#8a8a8a" strokeWidth="1" />
      </svg>
      <svg width="6" height="9" viewBox="0 0 6 9" fill="none" className="absolute right-[0px] top-[20px]">
        <path d="M5 .5L1 4.5L5 8.5" stroke="#8a8a8a" strokeWidth="1" />
      </svg>
      <div className="flex h-[27px] items-center bg-[#3a3a3a] text-[#c8c8c8]">
        <div className="ml-[8px] flex h-[19px] w-[29px] items-center justify-center gap-[1px] rounded-[3px] bg-[#2f2f2f]">
          <Ico s={15}>
            <circle cx="11" cy="11" r="9.5" fill="#e4e4e4" />
            <path d="M11 11L20 5V17Z" fill="#2f2f2f" />
          </Ico>
          <Chev />
        </div>
        <div className="ml-[7px] flex h-[19px] w-[60px] items-center justify-between bg-[#333333] pl-[6px] pr-[4px]">Lecture<Chev /></div>
        <div className="flex h-[19px] w-[83px] items-center justify-between bg-[#333333] pl-[6px] pr-[4px]">Incrustation<Chev /></div>
        <span className="ml-[8px] w-[21px] shrink-0">Vue</span>
        <span className="ml-[13px] w-[48px] shrink-0">Marqueur</span>
        <div className="ml-[260px] flex h-[19px] w-[18px] items-center justify-center rounded-[3px] bg-[#6b6b6b]">
          <div className="h-[7px] w-[7px] rounded-full bg-[#d8d8d8]" />
        </div>
        <div className="ml-[6px] flex h-[19px] w-[115px] items-center justify-around rounded-[3px] bg-[#545454]">
          <Ico s={12}><path d="M3 3V19M19 3V19L7 11Z" stroke="#e2e2e2" strokeWidth="1.6" fill="#e2e2e2" /></Ico>
          <Ico s={13}><path d="M1 11L7 5V17ZM21 11L15 5V17ZM11 7L15 11L11 15L7 11Z" fill="#e2e2e2" /></Ico>
          <Ico s={14}><path d="M4 11L19 2V20Z" fill="#e8e8e8" /></Ico>
          <Ico s={14}><path d="M18 11L3 2V20Z" fill="#e8e8e8" /></Ico>
          <Ico s={13}><path d="M1 5L7 11L1 17ZM21 11L15 5L11 11L15 17Z" fill="#e2e2e2" /></Ico>
          <Ico s={12}><path d="M19 3V19M3 3V19L15 11Z" stroke="#e2e2e2" strokeWidth="1.6" fill="#e2e2e2" /></Ico>
        </div>
        <div className="ml-[274px] flex h-[19px] w-[71px] items-center justify-center rounded-[3px] bg-[#545454]">1</div>
        <div className="ml-[6px] flex h-[19px] w-[18px] items-center justify-center rounded-l-[3px] bg-[#7c7c7c]">
          <Ico s={15}>
            <circle cx="11" cy="13" r="7.5" stroke="#a8a8a8" strokeWidth="1.3" />
            <path d="M8 2H14M11 7V13H14" stroke="#a8a8a8" strokeWidth="1.3" />
          </Ico>
        </div>
        <div className="flex h-[19px] w-[92px] items-center border-r border-[#474747] bg-[#545454] pl-[15px] pr-[14px]">
          <span className="flex-1">Début</span>1
        </div>
        <div className="flex h-[19px] w-[79px] items-center rounded-r-[3px] bg-[#545454] pl-[15px] pr-[14px]">
          <span className="flex-1">Fin</span>250
        </div>
      </div>
    </div>
  );
};

// mouse hint icon, part marks the highlighted button
const Mouse = ({ part, drag }: { part: 'l' | 'r' | 'm'; drag?: boolean }) => (
  <svg width={drag ? 16 : 12} height="16" viewBox={drag ? '0 0 16 16' : '0 0 12 16'} fill="none">
    <rect x="1" y="1" width="10" height="14" rx="3.5" stroke="#a5a5a5" strokeWidth="1.1" />
    {part === 'l' && <path d="M1.5 7V4C1.5 2.5 2.8 1.5 5.5 1.5V7Z" fill="#dcdcdc" />}
    {part === 'r' && <path d="M10.5 7V4C10.5 2.5 9.2 1.5 6.5 1.5V7Z" fill="#dcdcdc" />}
    {part === 'm' && <rect x="4.5" y="2.5" width="3" height="6" rx="1" fill="#dcdcdc" />}
    {drag && <path d="M13 2V7M15 2V6" stroke="#a5a5a5" strokeWidth="1" />}
  </svg>
);

const StatusBar = () => (
  <div className="relative flex h-[19px] items-center whitespace-nowrap bg-[#2b2b2b] text-[#a8a8a8]">
    <div className="ml-[10px]"><Mouse part="l" /></div>
    <span className="ml-[10px] w-[93px] shrink-0">Définir curseur 3D</span>
    <div className="ml-[10px]"><Mouse part="l" drag /></div>
    <span className="ml-[7px] w-[111px] shrink-0">Sélectionner par boîte</span>
    <div className="ml-[18px]"><Mouse part="m" /></div>
    <span className="ml-[8px] w-[61px] shrink-0">Tourner vue</span>
    <div className="ml-[175px]"><Mouse part="r" /></div>
    <span className="ml-[9px] w-[63px] shrink-0">Sélectionner</span>
    <div className="ml-[10px]"><Mouse part="r" drag /></div>
    <span className="ml-[7px]">Déplacer</span>
    <span className="ml-auto mr-[30px]">Cube | Verts:10/16 | Arêtes:11/28 | Faces:3/14 | Tris:28 | Mem: 48.4 MiB | v2.82.7</span>
    <div className="absolute bottom-0 left-[32px] h-[1px] w-[229px] bg-[#c4c4c4]" />
  </div>
);

export default function App() {
  return (
    <div className="flex h-[720px] w-[1280px] flex-col overflow-hidden bg-black font-['DejaVu_Sans',sans-serif] text-[10.25px] leading-none">
      <div className="h-[21px] shrink-0 bg-black" />
      <div className="h-[1px] shrink-0 bg-[#d4d4d4]" />
      <Header />
      <div className="flex h-[632px] shrink-0">
        <div className="flex w-[1233px] flex-col">
          <div className="relative flex-1 overflow-hidden bg-black">
            <Scene3D />
            <div className="absolute left-[75px] top-[10px] flex flex-col gap-[8px] text-[#e6e6e6]">
              <span className="leading-[12px]">User Perspective</span>
              <span className="leading-[12px]">(1) Cube</span>
            </div>
            {/* tool shelf */}
            <div className="absolute left-[8px] top-[8px] flex w-[40px] flex-col gap-[6px]">
              {tools.map((group, g) => (
                <div key={g} className={g === 3 ? '-mt-[2px] flex flex-col overflow-hidden rounded-[4px] bg-[#2f2f2f]' : 'flex flex-col overflow-hidden rounded-[4px] bg-[#2f2f2f]'}>
                  {group.map((t, i) => (
                    <div
                      key={i}
                      className={t.active
                        ? 'relative flex h-[33px] items-center justify-center bg-[#5680c2] pr-[4px]'
                        : g === 3
                          ? 'relative flex h-[33.5px] items-center justify-center pr-[4px]'
                          : 'relative flex h-[33px] items-center justify-center pr-[4px]'}
                    >
                      {t.icon}
                      {t.corner && <Corner />}
                    </div>
                  ))}
                </div>
              ))}
            </div>
            <BottomBar />
          </div>
          <Timeline />
        </div>
        <Sidebar />
      </div>
      <StatusBar />
      <div className="flex-1 bg-black" />
    </div>
  );
}
